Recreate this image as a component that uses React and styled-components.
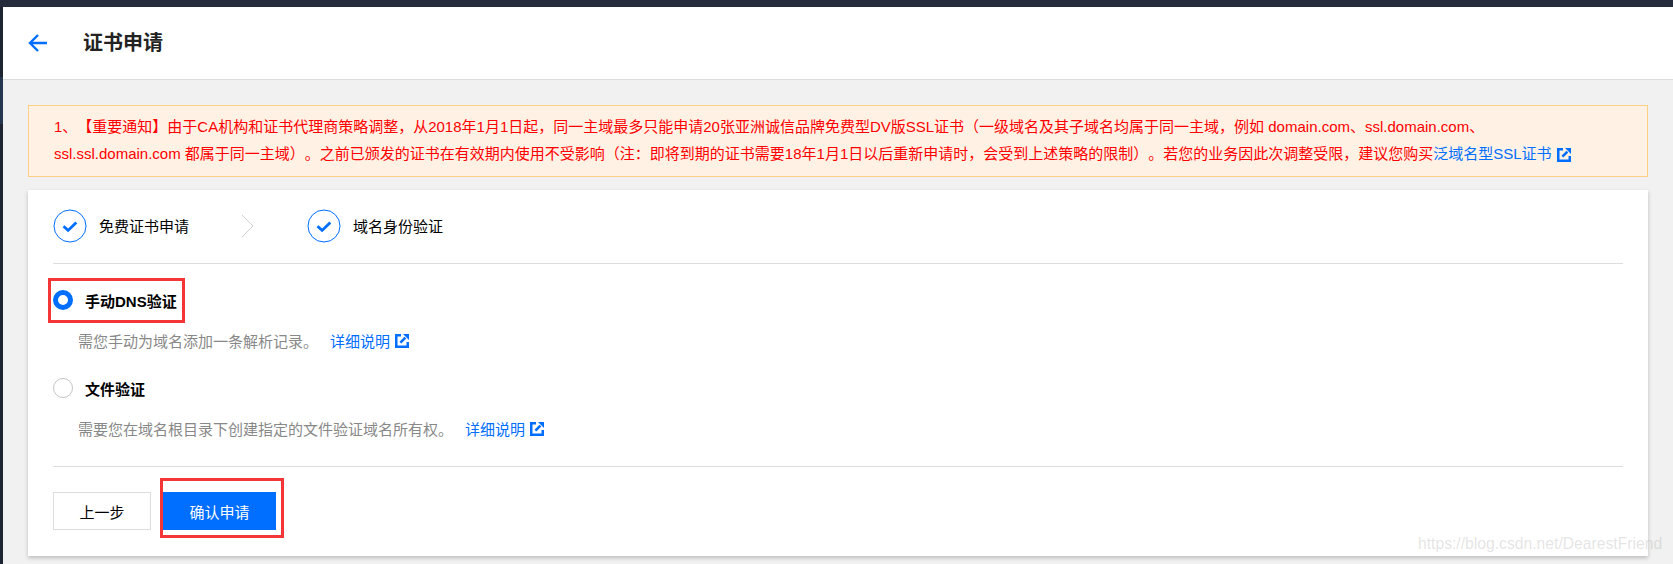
import React from "react";
import styled, { createGlobalStyle } from "styled-components";

const Global = createGlobalStyle`
  html, body { margin: 0; padding: 0; background: #f1f1f1; }
  body { font-family: "Liberation Sans", "Noto Sans CJK SC", sans-serif; overflow: hidden; text-spacing-trim: space-all; }
`;
const Shell = styled.div`display: flex; width: 1673px; height: 564px; overflow: hidden; position: relative;`;
const Rail = styled.div`width: 3px; flex: none; display: flex; flex-direction: column; background: #1d2532;`;
const RailActive = styled.div`height: 47px; margin-top: 77px; background: #25364f;`;
const Main = styled.div`flex: 1; display: flex; flex-direction: column; min-width: 0;`;
const TopBar = styled.div`height: 7px; flex: none; background: #252d3d; margin-left: -3px;`;
const Header = styled.header`height: 73px; flex: none; box-sizing: border-box; background: #fff; border-bottom: 1px solid #dcdcdc; display: flex; align-items: center; padding: 0 0 0 25px;`;
const BackIcon = styled.svg`width: 20px; height: 20px; flex: none; margin-right: 35px; color: #006eff;`;
const Title = styled.h1`margin: 0; font-size: 20px; font-weight: 700; color: #222; line-height: 28px;`;
const Content = styled.main`padding: 25px 25px 0 25px; display: flex; flex-direction: column; gap: 13px;`;
const Notice = styled.div`box-sizing: border-box; height: 72px; border: 1px solid #fdcf85; background: #fff2e5; padding: 7px 0 0 25px; font-size: 15px; line-height: 27px; color: #ff0000; white-space: nowrap;`;
const Link = styled.a`color: #006eff; text-decoration: none; display: inline-flex; align-items: center;`;
const ExtIcon = styled.svg`width: 14px; height: 14px; margin: 2px 0 0 5px; flex: none;`;
const Card = styled.section`height: 366px; box-sizing: border-box; background: #fff; box-shadow: 0 2px 4px rgba(0,0,0,.22); padding: 0 25px;`;
const Steps = styled.div`height: 74px; box-sizing: border-box; padding-bottom: 2px; display: flex; align-items: center; border-bottom: 1px solid #dddddd;`;
const Step = styled.div`display: flex; align-items: center; gap: 12px; font-size: 15px; color: #000;`;
const StepCircle = styled.svg`width: 34px; height: 34px; flex: none;`;
const Chevron = styled.svg`width: 14px; height: 24px; margin: 0 52px 0 52px; flex: none;`;
const Options = styled.div`height: 203px; box-sizing: border-box; padding-top: 21px; border-bottom: 1px solid #dddddd;`;
const Row = styled.div`position: relative; display: flex; align-items: center; gap: 12px; height: 30px;`;
const Radio = styled.span`width: 20px; height: 20px; border-radius: 50%; box-sizing: border-box; flex: none; background: #fff;
  border: ${p => (p.$on ? "5.5px solid #006eff" : "1px solid #c4c4c4")};`;
const Label = styled.span`font-size: 15px; font-weight: 700; color: #000;`;
const Desc = styled.div`margin: ${p => p.$top}px 0 ${p => p.$bottom}px 25px; height: 24px; display: flex; align-items: center; font-size: 15px; color: #888;`;
const DescLink = styled(Link)`margin-left: ${p => p.$gap}px;`;
const Highlight = styled.span`position: absolute; box-sizing: border-box; border: 3px solid #f43636; pointer-events: none; left: ${p => p.$l}px; top: ${p => p.$t}px; width: ${p => p.$w}px; height: ${p => p.$h}px;`;
const Actions = styled.div`display: flex; gap: 12px; padding-top: 25px;`;
const Button = styled.button`position: relative; width: ${p => p.$w}px; height: 38px; box-sizing: border-box; font: inherit; font-size: 15px; cursor: pointer;
  color: ${p => (p.$primary ? "#fff" : "#000")}; background: ${p => (p.$primary ? "#006eff" : "#fff")}; border: ${p => (p.$primary ? "0" : "1px solid #dddddd")};`;
const Watermark = styled.span`position: absolute; left: 1418px; top: 535px; font-size: 15.7px; color: rgba(170,170,170,.32); white-space: nowrap;`;

const External = () => (
  <ExtIcon viewBox="0 0 14 14">
    <path d="M6 1.25H1.25v11.5h11.5V8" fill="none" stroke="#006eff" strokeWidth="2.5" />
    <path d="M8 0h6v6z" fill="#006eff" />
    <path d="M5.4 8.6L10.4 3.6" fill="none" stroke="#006eff" strokeWidth="2.5" />
  </ExtIcon>
);
const Done = () => (
  <StepCircle viewBox="0 0 34 34">
    <circle cx="17" cy="17" r="16" fill="#fff" stroke="#006eff" strokeWidth="1" />
    <path d="M10.5 17.2l4.6 4.2 8.2-8" fill="none" stroke="#006eff" strokeWidth="2.8" />
  </StepCircle>
);

export default function App() {
  return (
    <Shell>
      <Global />
      <Rail><RailActive /></Rail>
      <Main>
        <TopBar />
        <Header>
          <BackIcon viewBox="0 0 20 20">
            <path d="M19 10H3M10 2l-8 8 8 8" fill="none" stroke="currentColor" strokeWidth="2.4" />
          </BackIcon>
          <Title>证书申请</Title>
        </Header>
        <Content>
          <Notice>
            1、【重要通知】由于CA机构和证书代理商策略调整，从2018年1月1日起，同一主域最多只能申请20张亚洲诚信品牌免费型DV版SSL证书（一级域名及其子域名均属于同一主域，例如 domain.com、ssl.domain.com、<br />
            ssl.ssl.domain.com 都属于同一主域）。之前已颁发的证书在有效期内使用不受影响（注：即将到期的证书需要18年1月1日以后重新申请时，会受到上述策略的限制）。若您的业务因此次调整受限，建议您购买<Link href="#">泛域名型SSL证书<External /></Link>
          </Notice>
          <Card>
            <Steps>
              <Step><Done />免费证书申请</Step>
              <Chevron viewBox="0 0 14 24"><path d="M1 1l11 11L1 23" fill="none" stroke="#cfcfcf" strokeWidth="1" /></Chevron>
              <Step><Done />域名身份验证</Step>
            </Steps>
            <Options>
              <Row>
                <Radio $on />
                <Label>手动DNS验证</Label>
                <Highlight $l={-5} $t={-7} $w={137} $h={45} />
              </Row>
              <Desc $top={13} $bottom={21}>需您手动为域名添加一条解析记录。<DescLink href="#" $gap={12}>详细说明<External /></DescLink></Desc>
              <Row>
                <Radio />
                <Label>文件验证</Label>
              </Row>
              <Desc $top={13} $bottom={0}>需要您在域名根目录下创建指定的文件验证域名所有权。<DescLink href="#" $gap={12}>详细说明<External /></DescLink></Desc>
            </Options>
            <Actions>
              <Button $w={98}>上一步</Button>
              <Button $primary $w={113}>确认申请<Highlight $l={-3} $t={-14} $w={124} $h={60} /></Button>
            </Actions>
          </Card>
        </Content>
      </Main>
      <Watermark>https://blog.csdn.net/DearestFriend</Watermark>
    </Shell>
  );
}
